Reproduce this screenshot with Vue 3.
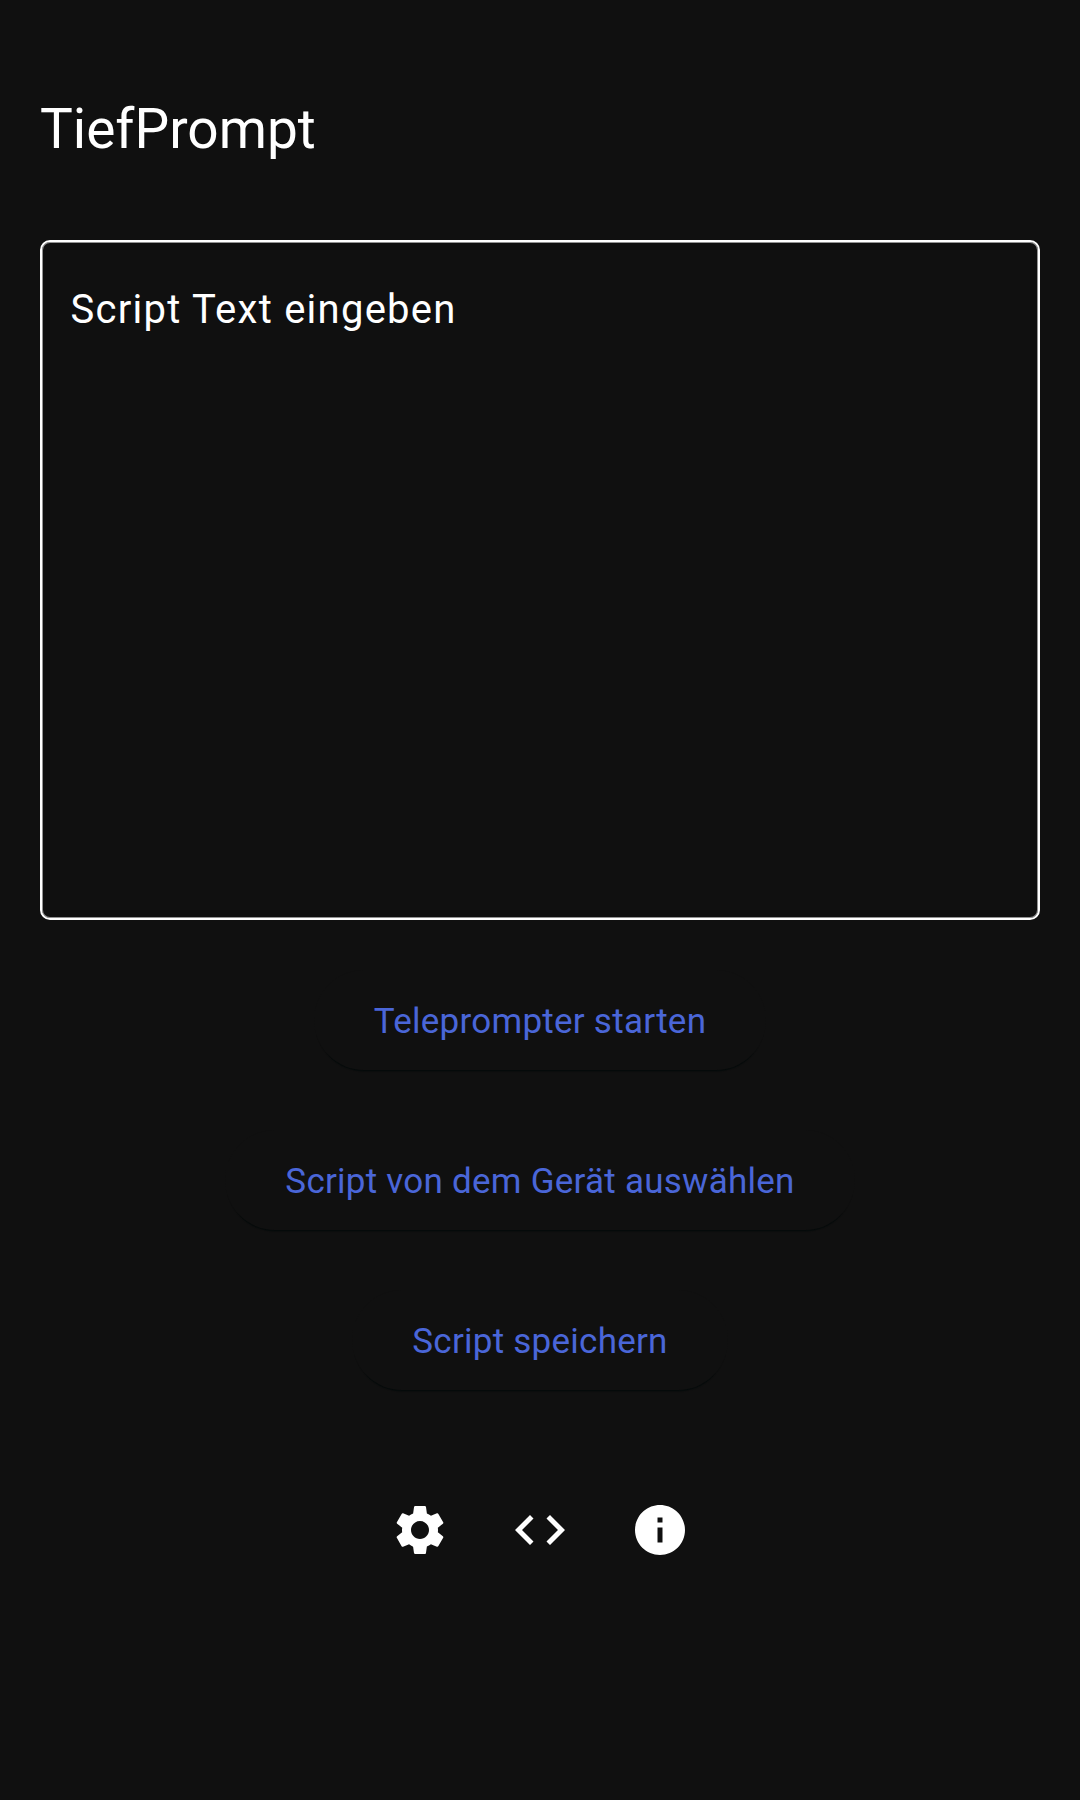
<script setup>
const actions = ['Teleprompter starten', 'Script von dem Gerät auswählen', 'Script speichern']
</script>

<template>
  <main class="screen">
    <h1 class="title">TiefPrompt</h1>
    <div class="editor">Script Text eingeben</div>
    <div class="actions">
      <button v-for="label in actions" :key="label" class="action">{{ label }}</button>
    </div>
    <nav class="links">
      <svg viewBox="0 0 24 24"><path d="M19.14 12.94c.04-.3.06-.61.06-.94 0-.32-.02-.64-.07-.94l2.03-1.58a.49.49 0 0 0 .12-.61l-1.92-3.32a.488.488 0 0 0-.59-.22l-2.39.96c-.5-.38-1.03-.7-1.62-.94l-.36-2.54a.484.484 0 0 0-.48-.41h-3.84c-.24 0-.43.17-.47.41l-.36 2.54c-.59.24-1.13.57-1.62.94l-2.39-.96c-.22-.08-.47 0-.59.22L2.74 8.87c-.12.21-.08.47.12.61l2.03 1.58c-.05.3-.09.63-.09.94s.02.64.07.94l-2.03 1.58a.49.49 0 0 0-.12.61l1.92 3.32c.12.22.37.29.59.22l2.39-.96c.5.38 1.03.7 1.62.94l.36 2.54c.05.24.24.41.48.41h3.84c.24 0 .44-.17.47-.41l.36-2.54c.59-.24 1.13-.56 1.62-.94l2.39.96c.22.08.47 0 .59-.22l1.92-3.32c.12-.22.07-.47-.12-.61l-2.01-1.58zM12 15.6c-1.98 0-3.6-1.62-3.6-3.6s1.62-3.6 3.6-3.6 3.6 1.62 3.6 3.6-1.62 3.6-3.6 3.6z" /></svg>
      <svg viewBox="0 0 24 24"><path d="M9.4 16.6 4.8 12l4.6-4.6L8 6l-6 6 6 6 1.4-1.4zm5.2 0 4.6-4.6-4.6-4.6L16 6l6 6-6 6-1.4-1.4z" /></svg>
      <svg viewBox="0 0 24 24"><path d="M12 2C6.48 2 2 6.48 2 12s4.48 10 10 10 10-4.48 10-10S17.52 2 12 2zm1 15h-2v-6h2v6zm0-8h-2V7h2v2z" /></svg>
    </nav>
  </main>
</template>

<style>
body { background: #101010; }
</style>

<style scoped>
.screen {
  box-sizing: border-box;
  height: 1800px;
  padding: 97px 40px 0;
  background: #101010;
  color: #fff;
  font-family: Roboto, sans-serif;
  display: flex;
  flex-direction: column;
}
.title { margin: 0; font-size: 55px; line-height: 64px; font-weight: 400; }
.editor {
  box-sizing: border-box;
  height: 680px;
  margin-top: 79px;
  padding: 43px 28.5px;
  border: 2px solid #fff;
  border-radius: 10px;
  box-shadow: inset 0 0 0 1px rgba(255, 255, 255, .55);
  font-size: 40px;
  line-height: 50px;
  letter-spacing: 1.25px;
}
.actions { display: flex; flex-direction: column; align-items: center; gap: 60px; margin-top: 50px; }
.action {
  height: 100px;
  padding: 4px 60px 0;
  border: 0;
  border-radius: 50px;
  background: #101010;
  box-shadow: 0 3.5px 1px -2px #060b0b;
  color: #4a66d8;
  font: 400 35px/50px Roboto, sans-serif;
  letter-spacing: .25px;
}
.links { display: flex; justify-content: center; gap: 60px; margin-top: 110px; }
.links svg { width: 60px; height: 60px; fill: #fff; }
</style>
